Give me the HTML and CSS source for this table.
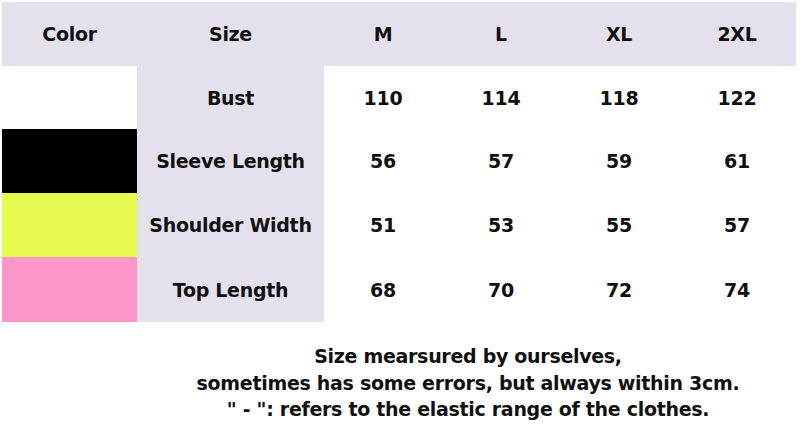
FILE: index.html
```html
<!DOCTYPE html>
<html>
<head>
<meta charset="utf-8">
<link rel="stylesheet" href="styles.css">
</head>
<body>
<div class="chart">
  <div class="cell head">Color</div>
  <div class="cell head">Size</div>
  <div class="cell head">M</div>
  <div class="cell head">L</div>
  <div class="cell head">XL</div>
  <div class="cell head">2XL</div>

  <div class="cell swatch white"></div>
  <div class="cell label">Bust</div>
  <div class="cell">110</div>
  <div class="cell">114</div>
  <div class="cell">118</div>
  <div class="cell">122</div>

  <div class="cell swatch black"></div>
  <div class="cell label">Sleeve Length</div>
  <div class="cell">56</div>
  <div class="cell">57</div>
  <div class="cell">59</div>
  <div class="cell">61</div>

  <div class="cell swatch lime"></div>
  <div class="cell label">Shoulder Width</div>
  <div class="cell">51</div>
  <div class="cell">53</div>
  <div class="cell">55</div>
  <div class="cell">57</div>

  <div class="cell swatch pink"></div>
  <div class="cell label">Top Length</div>
  <div class="cell">68</div>
  <div class="cell">70</div>
  <div class="cell">72</div>
  <div class="cell">74</div>
</div>
<div class="note">
  <div>Size mearsured by ourselves,</div>
  <div>sometimes has some errors, but always within 3cm.</div>
  <div>" - ": refers to the elastic range of the clothes.</div>
</div>
</body>
</html>
```
FILE: styles.css
```css
html, body {
  margin: 0;
  padding: 0;
  background: #ffffff;
}
body {
  padding: 2px 0 0 2px;
  font-family: "DejaVu Sans", "Liberation Sans", sans-serif;
  font-weight: bold;
  color: #111111;
}
.chart {
  display: grid;
  grid-template-columns: 135px 187px repeat(4, 118px);
  grid-template-rows: 64px 63px 64px 64px 65px;
  width: 794px;
}
.cell {
  display: flex;
  align-items: center;
  justify-content: center;
  font-size: 19px;
  letter-spacing: -0.3px;
}
.head {
  background: #e4e0ec;
}
.label {
  background: #e4e0ec;
}
.swatch.white { background: #ffffff; }
.swatch.black { background: #000000; }
.swatch.lime { background: #e6fb4e; }
.swatch.pink { background: #fd97ca; }
.note {
  padding-left: 134px;
  margin-top: 21px;
  text-align: center;
  font-size: 19px;
  line-height: 26.5px;
  letter-spacing: -0.3px;
}
```
